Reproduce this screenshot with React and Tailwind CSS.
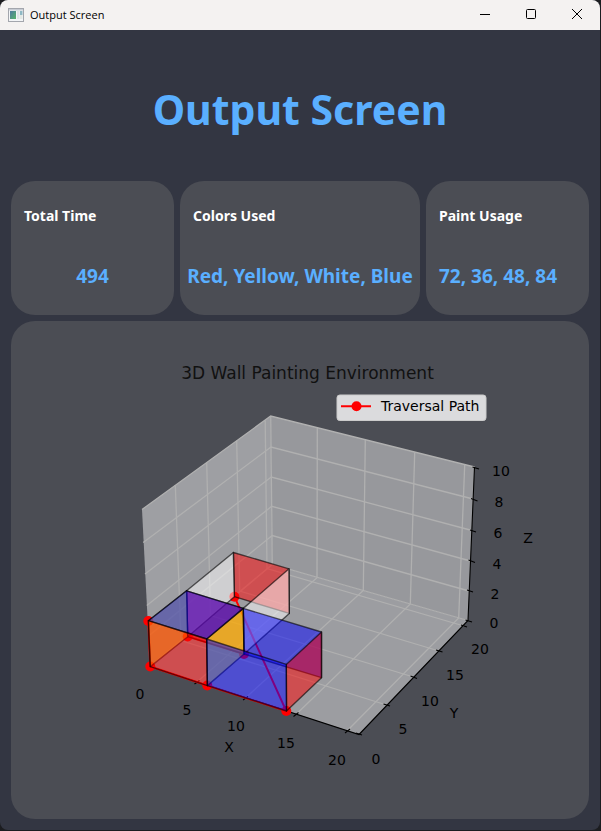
import React from "react";

const WINDOW_FONT = "font-['Open_Sans','Noto_Sans',sans-serif]";
const PANEL_FONT = "font-['Noto_Sans','DejaVu_Sans',sans-serif]";

const stats = [
  { label: "Total Time", value: "494", align: "text-center" },
  { label: "Colors Used", value: "Red, Yellow, White, Blue", align: "text-center" },
  { label: "Paint Usage", value: "72, 36, 48, 84", align: "px-[13px] text-left" },
];

const panes = [
  { points: "142,509.5 270.7,416 272.3,564.5 150,666.5", fill: "#9e9fa3" },
  { points: "270.7,416 474.5,467 468,620.5 272.3,564.5", fill: "#97989c" },
  { points: "150,666.5 272.3,564.5 468,620.5 359,734.5", fill: "#9c9da1" },
];

const gridLines = [
  // constant x
  "317.3,428 317,577.7 197,682",
  "365.3,440 363.3,590.5 245.5,698",
  "414.7,452.5 410.3,604 296,714.5",
  "464.7,465 458.7,618 347,731",
  "270.7,416 272.3,564.5 150,666.5",
  // constant y
  "175.3,485 181,640.5 386.5,705",
  "206.7,462.5 210.5,615.5 413.5,677",
  "236.7,440.7 239.7,591 439,651",
  "265.2,420.5 267,568.5 464,626",
  // constant z
  "142,509.5 270.7,416 474.5,467",
  "143.2,542.5 271,447 473,499",
  "145,574 271.3,477 472,530.5",
  "146.8,605.5 271.7,506.3 470.5,561",
  "148.5,636 272.2,535.5 469,591",
  "150,666.5 272.3,564.5 468,620.5",
];

const ticks = [
  [194.5, 684, 199.5, 680.5],
  [243, 700, 248, 696.5],
  [293.5, 716.5, 298.5, 712.5],
  [345, 733, 350, 729],
  [356, 733, 362, 735],
  [383.5, 704, 390, 706],
  [410.5, 676, 417, 678.5],
  [436, 650, 442.5, 652],
  [461, 625, 467, 627],
  [465.5, 620, 472, 622],
  [467, 590, 473, 592],
  [468.5, 560, 475, 562.5],
  [470, 530, 476, 532],
  [471, 498.5, 477.5, 501],
  [472.5, 467, 479, 469],
];

const labels = [
  ["0", 140, 699],
  ["5", 187, 715],
  ["10", 236, 731],
  ["15", 286, 748],
  ["20", 337, 765],
  ["X", 229, 752],
  ["0", 376, 764],
  ["5", 403, 734],
  ["10", 430, 706],
  ["15", 455, 680],
  ["20", 480, 654],
  ["Y", 454, 718],
  ["0", 494, 628],
  ["2", 495, 599],
  ["4", 497, 569],
  ["6", 498, 538],
  ["8", 499, 507],
  ["10", 501, 476],
  ["Z", 528, 543],
];

const nodes = [
  [148.3, 621],
  [150.3, 666.5],
  [207.3, 685.5],
  [286.3, 711],
  [244, 654],
  [187.7, 636.5],
  [234.4, 596.7],
];

const faces = [
  { points: "233.4,552.5 289,568.8 289.3,613.4 234.4,596.7", fill: "#ff0000" },
  { points: "233.4,552.5 186.6,590.8 187.7,636.7 234.4,596.7", fill: "#ffffff" },
  { points: "289,568.8 243.3,608.4 244,654 289.3,613.4", fill: "#ffffff" },
  { points: "186.6,590.8 243.3,608.4 244,654 187.7,636.7", fill: "#ff0000" },
  { points: "148.4,620.7 186.6,590.8 187.7,636.7 150.3,666.6", fill: "#ffff00" },
  { points: "206.7,639 243.3,608.4 244,654 207.4,685.6", fill: "#ffff00" },
  { points: "148.4,620.7 186.6,590.8 243.3,608.4 206.7,639", fill: "#0000ff" },
  { points: "148.4,620.7 206.7,639 207.4,685.6 150.3,666.6", fill: "#ff0000" },
  { points: "243.3,608.4 321.5,632 321.5,677.7 244,654", fill: "#0000ff" },
  { points: "286.3,664.4 321.5,632 321.5,677.7 286.5,711", fill: "#ff0000" },
  { points: "206.7,639 286.3,664.4 286.5,711 207.4,685.6", fill: "#0000ff" },
];

function TitleBar() {
  return (
    <header className={"flex h-[30px] items-center bg-[#f4f2f1] pl-2 " + WINDOW_FONT}>
      <svg className="h-[14px] w-4" viewBox="0 0 16 14" aria-hidden="true">
        <rect x="0.5" y="0.5" width="15" height="13" fill="#f3f5f7" stroke="#a3a6ad" />
        <rect x="1" y="1" width="14" height="1.5" fill="#c6cbd3" />
        <defs>
          <linearGradient id="app-pane" x1="0" y1="0" x2="1" y2="1">
            <stop offset="0" stopColor="#4f79a0" />
            <stop offset="1" stopColor="#57b46a" />
          </linearGradient>
        </defs>
        <rect x="2" y="3" width="6" height="8" fill="url(#app-pane)" />
        <rect x="9" y="3" width="2.5" height="8" fill="#dfe3e6" />
        <rect x="12" y="3" width="2.5" height="4" fill="#8fb8c4" />
        <rect x="12" y="7" width="2.5" height="4" fill="#e3e8e4" />
      </svg>
      <h2 className="ml-1.5 flex-1 text-[11px] text-black">Output Screen</h2>
      <button type="button" aria-label="Minimize" className="grid h-full w-[46px] place-items-center">
        <svg className="size-3" viewBox="0 0 12 12" stroke="#000" fill="none">
          <path d="M1 5.5h10" />
        </svg>
      </button>
      <button type="button" aria-label="Maximize" className="grid h-full w-[46px] place-items-center">
        <svg className="size-3" viewBox="0 0 12 12" stroke="#000" fill="none">
          <rect x="1.5" y="0.5" width="9" height="9" rx="1" />
        </svg>
      </button>
      <button type="button" aria-label="Close" className="grid h-full w-[46px] place-items-center">
        <svg className="size-3" viewBox="0 0 12 12" stroke="#000" fill="none">
          <path d="M1 0l10 10M11 0L1 10" />
        </svg>
      </button>
    </header>
  );
}

function StatCard({ label, value, align }) {
  return (
    <section className="flex h-[134px] flex-col rounded-3xl bg-[#4b4d54] pt-[25px]">
      <h3 className="px-[13px] text-[14px] leading-5 font-bold text-white">{label}</h3>
      <p className={"mt-[38px] text-[19px] leading-6 font-bold whitespace-nowrap text-[#5aafff] " + align}>{value}</p>
    </section>
  );
}

function WallChart() {
  return (
    <svg
      className="block w-full font-['DejaVu_Sans',sans-serif] text-[14px]"
      viewBox="11 321 578 498"
      role="img"
      aria-label="3D Wall Painting Environment"
    >
      <text x="307.5" y="379" textAnchor="middle" className="fill-[#111111] text-[17px]">
        3D Wall Painting Environment
      </text>

      {panes.map((p) => (
        <polygon key={p.points} points={p.points} fill={p.fill} />
      ))}
      <g fill="none" stroke="#b0b0b0" strokeWidth="1.3">
        {gridLines.map((points) => (
          <polyline key={points} points={points} />
        ))}
      </g>
      <g fill="none" stroke="#000" strokeWidth="1.1">
        <polyline points="150,666.5 359,734.5 468,620.5 474.5,467" />
        {ticks.map(([x1, y1, x2, y2]) => (
          <line key={x1 + "-" + y1} x1={x1} y1={y1} x2={x2} y2={y2} />
        ))}
      </g>

      <g stroke="#ff0000" strokeWidth="2" fill="none">
        <polyline points="148.3,621 150.3,666.5 207.3,685.5 286.3,711 234.4,596.7" />
        <polyline points="187.7,636.5 244,654" />
      </g>
      {nodes.map(([cx, cy]) => (
        <circle key={cx} cx={cx} cy={cy} r="5" fill="#ff0000" />
      ))}

      {faces.map((f) => (
        <polygon
          key={f.points}
          points={f.points}
          fill={f.fill}
          fillOpacity="0.5"
          stroke="#000"
          strokeOpacity="0.6"
          strokeWidth="1.4"
          strokeLinejoin="round"
        />
      ))}

      <g className="fill-black" textAnchor="middle">
        {labels.map(([text, x, y]) => (
          <text key={text + x} x={x} y={y}>
            {text}
          </text>
        ))}
      </g>

      <rect x="337" y="395" width="149" height="25.5" rx="2.8" fill="#dbdbdd" stroke="#cccccc" />
      <path d="M341 406.2H371" stroke="#ff0000" strokeWidth="2" />
      <circle cx="356.5" cy="406.3" r="5" fill="#ff0000" />
      <text x="381" y="411" className="fill-black">
        Traversal Path
      </text>
    </svg>
  );
}

export default function App() {
  return (
    <div className="flex min-h-screen flex-col bg-[#1c1d20] pr-px pb-px">
      <div className="flex flex-1 flex-col overflow-hidden rounded-lg bg-[#333642]">
        <TitleBar />
        <main className={"flex-1 px-[11px] pb-[11px] " + PANEL_FONT}>
          <h1 className="pt-[55px] pb-12 text-center text-[41px] leading-[48px] font-bold text-[#5aafff]">
            Output Screen
          </h1>
          <div className="grid grid-cols-[163fr_240fr_163fr] gap-1.5">
            {stats.map((s) => (
              <StatCard key={s.label} {...s} />
            ))}
          </div>
          <section className="mt-1.5 overflow-hidden rounded-3xl bg-[#4b4d54]">
            <WallChart />
          </section>
        </main>
      </div>
    </div>
  );
}
